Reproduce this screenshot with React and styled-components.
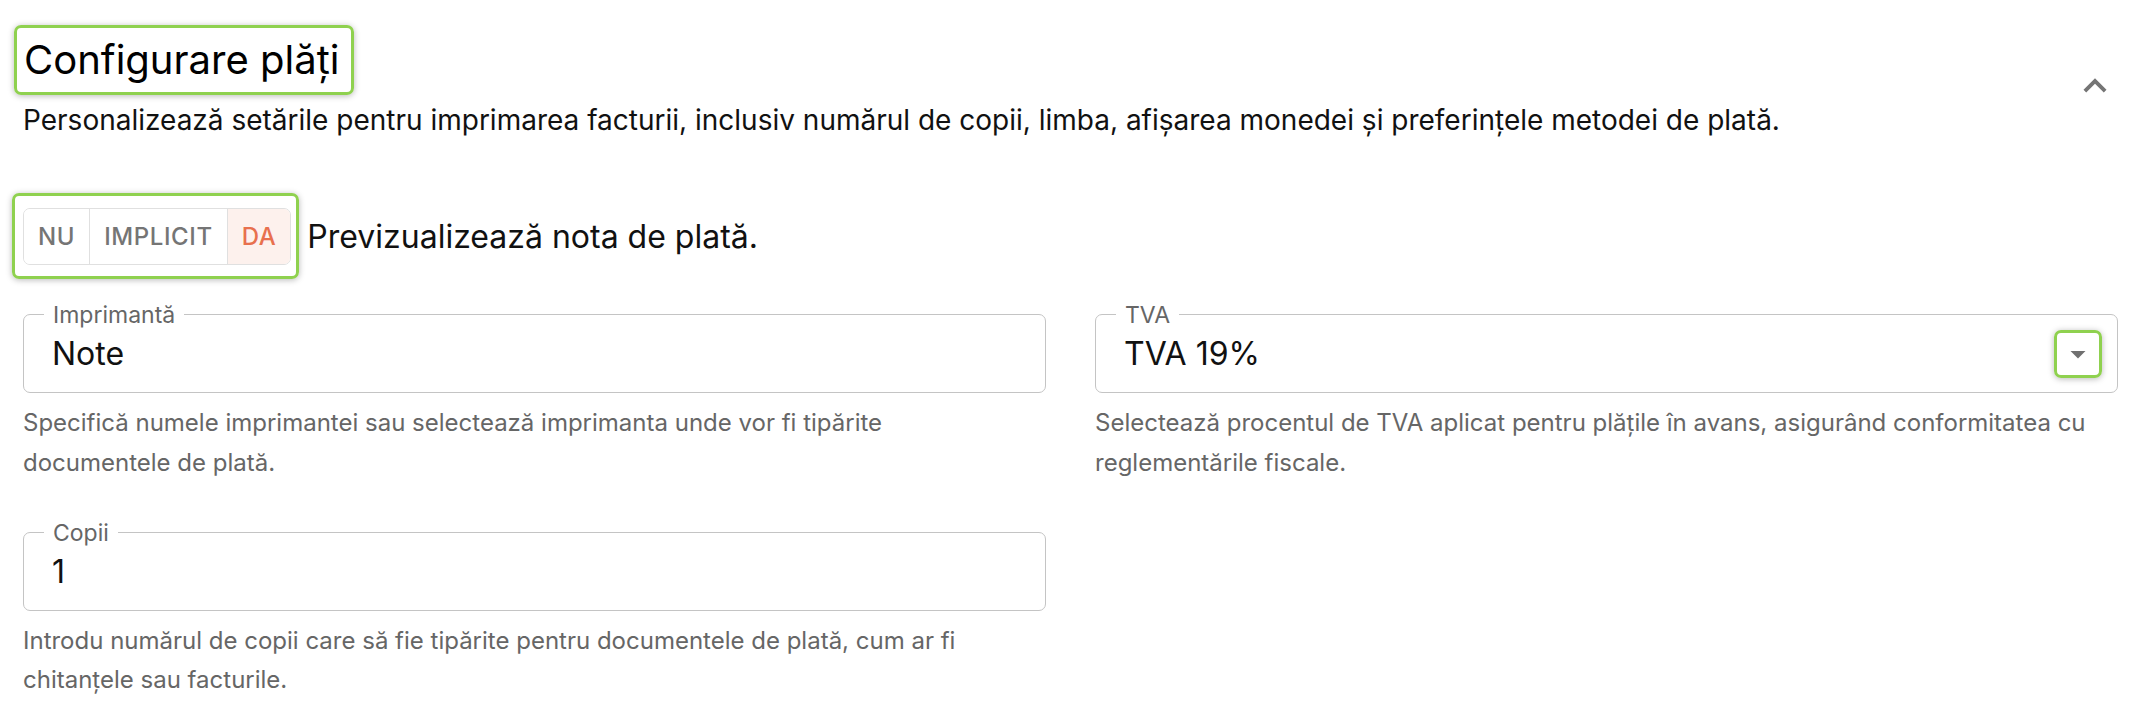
import styled, { createGlobalStyle } from 'styled-components';

const GlobalStyle = createGlobalStyle`
  html, body {
    margin: 0;
    background: #fff;
    font-family: 'Inter', 'Noto Sans', sans-serif;
    color: #111;
  }
`;

const fields = [
  {
    label: 'Imprimantă',
    value: 'Note',
    help: 'Specifică numele imprimantei sau selectează imprimanta unde vor fi tipărite documentele de plată.',
  },
  {
    label: 'TVA',
    value: 'TVA 19%',
    select: true,
    help: 'Selectează procentul de TVA aplicat pentru plățile în avans, asigurând conformitatea cu reglementările fiscale.',
  },
  {
    label: 'Copii',
    value: '1',
    help: 'Introdu numărul de copii care să fie tipărite pentru documentele de plată, cum ar fi chitanțele sau facturile.',
  },
];

const options = ['NU', 'IMPLICIT', 'DA'];

const ChevronUp = () => (
  <svg width="46" height="46" viewBox="0 0 24 24" fill="#757575">
    <path d="M12 8l-6 6 1.41 1.41L12 10.83l4.59 4.58L18 14z" />
  </svg>
);

const DropArrow = () => (
  <svg width="36" height="36" viewBox="0 0 24 24" fill="#707070">
    <path d="M7 10l5 5 5-5z" />
  </svg>
);

const App = () => {
  return (
    <Page>
      <GlobalStyle />
      <Header>
        <HeaderText>
          <Mark $pad="8px 12px 8px 7px" $ml="-9px">
            <Title>Configurare plăți</Title>
          </Mark>
          <Desc>
            Personalizează setările pentru imprimarea facturii, inclusiv numărul de copii,
            limba, afișarea monedei și preferințele metodei de plată.
          </Desc>
        </HeaderText>
        <Collapse type="button">
          <ChevronUp />
        </Collapse>
      </Header>

      <ToggleRow>
        <Mark $pad="12px 5px 11px 8px" $ml="-11px">
          <ToggleGroup>
            {options.map((o) => (
              <ToggleBtn key={o} type="button" $active={o === 'DA'}>
                {o}
              </ToggleBtn>
            ))}
          </ToggleGroup>
        </Mark>
        <ToggleLabel>Previzualizează nota de plată.</ToggleLabel>
      </ToggleRow>

      <Fields>
        {fields.map((f) => (
          <Field key={f.label}>
            <Box>
              <Label>{f.label}</Label>
              <Value>{f.value}</Value>
              {f.select && (
                <Mark $pad="3px 3px" $ml="0">
                  <ArrowWrap>
                    <DropArrow />
                  </ArrowWrap>
                </Mark>
              )}
            </Box>
            <Help>{f.help}</Help>
          </Field>
        ))}
      </Fields>
    </Page>
  );
};

export default App;

const Page = styled.div`
  padding: 25px 23px 0;
  box-sizing: border-box;
  width: 2141px;
`;

const Header = styled.div`
  display: flex;
  align-items: center;
  justify-content: space-between;
`;

const HeaderText = styled.div`
  display: flex;
  flex-direction: column;
  align-items: flex-start;
`;

const Mark = styled.div`
  display: inline-flex;
  align-items: center;
  border: 3px solid #8fd14f;
  border-radius: 7px;
  box-shadow: 0 1px 6px rgba(0, 0, 0, 0.28);
  padding: ${(p) => p.$pad};
  margin-left: ${(p) => p.$ml};
`;

const Title = styled.h1`
  margin: 0;
  font-size: 40px;
  font-weight: 400;
  line-height: 48px;
  color: #000;
`;

const Desc = styled.p`
  margin: 5px 0 0;
  font-size: 28px;
  line-height: 40px;
  color: #111;
`;

const Collapse = styled.button`
  border: none;
  background: none;
  padding: 0;
  margin: 6px 0 0;
  display: flex;
  cursor: pointer;
`;

const ToggleRow = styled.div`
  display: flex;
  align-items: center;
  margin-top: 53px;
`;

const ToggleGroup = styled.div`
  display: flex;
  border-radius: 7px;
  overflow: hidden;
  border: 1px solid #e0e0e0;
`;

const ToggleBtn = styled.button`
  height: 55px;
  padding: 0 14px;
  border: none;
  border-left: 1px solid #e0e0e0;
  background: ${(p) => (p.$active ? '#fdf1ed' : '#fff')};
  color: ${(p) => (p.$active ? '#e8704e' : '#757575')};
  font-family: 'Inter', sans-serif;
  font-size: 24px;
  font-weight: 500;
  letter-spacing: 0.6px;
  text-transform: uppercase;
  &:first-child {
    border-left: none;
  }
`;

const ToggleLabel = styled.span`
  margin-left: 8px;
  font-size: 32px;
  color: #111;
`;

const Fields = styled.div`
  display: grid;
  grid-template-columns: 1fr 1fr;
  column-gap: 49px;
  row-gap: 49px;
  margin-top: 35px;
`;

const Field = styled.div`
  display: flex;
  flex-direction: column;
`;

const Box = styled.div`
  position: relative;
  height: 79px;
  box-sizing: border-box;
  border: 1.5px solid #c4c4c4;
  border-radius: 7px;
  display: flex;
  align-items: center;
  justify-content: space-between;
  padding: 0 15px 0 28px;
`;

const Label = styled.span`
  position: absolute;
  top: 0;
  left: 20px;
  transform: translateY(-50%);
  padding: 0 9px;
  background: #fff;
  font-size: 23px;
  line-height: 1;
  color: #666;
`;

const Value = styled.span`
  font-size: 32px;
  color: #111;
`;

const ArrowWrap = styled.span`
  display: flex;
`;

const Help = styled.p`
  margin: 10px 22px 0 0;
  font-size: 24px;
  line-height: 1.66;
  color: #666;
`;
